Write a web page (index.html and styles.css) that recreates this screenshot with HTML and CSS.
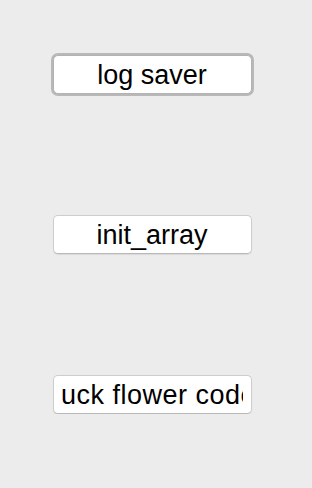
FILE: index.html
```html
<!DOCTYPE html>
<html>
<head>
    <title>Buttons</title>
    <link rel="stylesheet" href="styles.css">
</head>
<body>
    <div class="panel">
        <button type="button" class="btn focused"><span class="label">log saver</span></button>
        <button type="button" class="btn"><span class="label">init_array</span></button>
        <button type="button" class="btn"><span class="label left">uck flower code</span></button>
    </div>
</body>
</html>
```

FILE: styles.css
```css
body {
    font-family: "Liberation Sans", Arial, sans-serif;
    background-color: #ececec;
    margin: 0;
    padding: 0;
}

.panel {
    display: flex;
    flex-direction: column;
    align-items: flex-start;
    gap: 121px;
    padding: 55px 0 0 53px;
}

.btn {
    width: 199px;
    height: 39px;
    padding: 0 8px 0 7px;
    background-color: #fff;
    border: 1px solid #cdcdcd;
    border-bottom-color: #b8b8b8;
    border-radius: 5px;
    box-shadow: 0 1px 1px rgba(0, 0, 0, 0.08);
    font-family: inherit;
    font-size: 27px;
    color: #000;
    cursor: pointer;
}

.btn.focused {
    border-color: #b3b3b3;
    box-shadow: 0 0 0 2px #b8b8b8;
}

.label {
    display: block;
    overflow: hidden;
    white-space: nowrap;
    text-align: center;
    line-height: 38px;
}

.label.left {
    text-align: left;
    letter-spacing: 0.5px;
}
```
